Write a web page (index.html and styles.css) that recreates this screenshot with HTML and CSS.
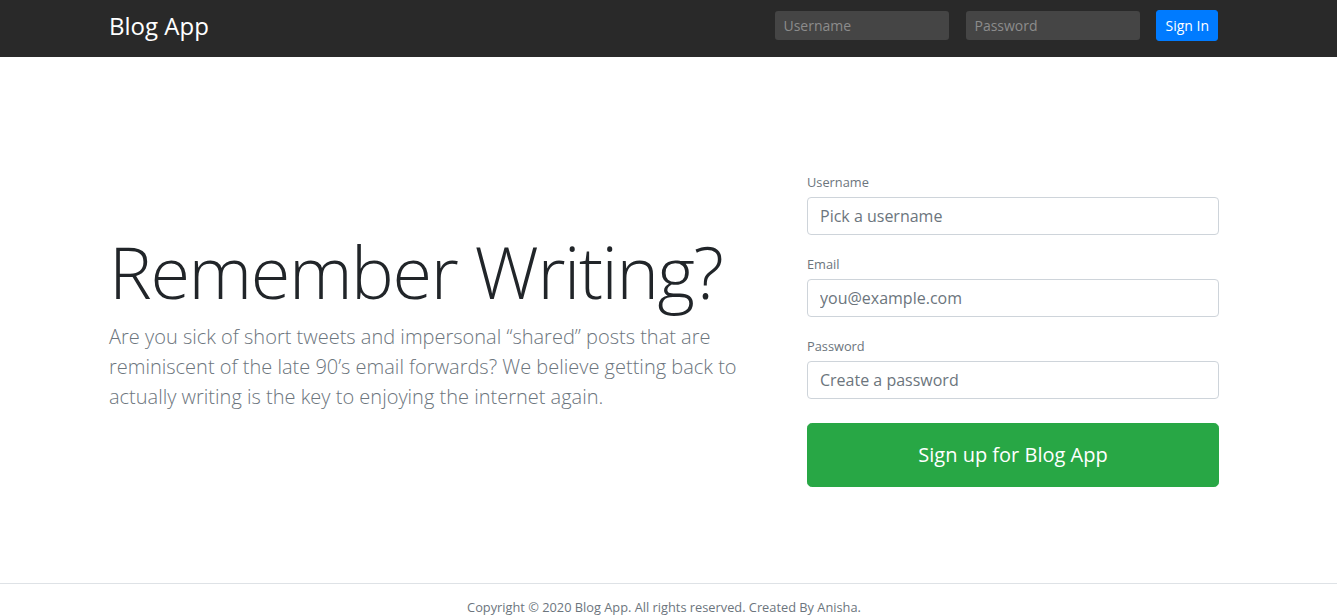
FILE: index.html
```html
<!DOCTYPE html>
<html lang="en">
<head>
<meta charset="utf-8">
<title>Blog App</title>
<link rel="stylesheet" href="styles.css">
</head>
<body>
<div class="page">
  <header class="navbar">
    <div class="container nav-inner">
      <h4 class="brand">Blog App</h4>
      <form class="nav-form">
        <input class="nav-input" type="text" placeholder="Username">
        <input class="nav-input" type="password" placeholder="Password">
        <button class="btn-signin" type="button">Sign In</button>
      </form>
    </div>
  </header>

  <main class="hero">
    <div class="container hero-row">
      <div class="hero-text">
        <h1 class="display">Remember Writing?</h1>
        <p class="lead">Are you sick of short tweets and impersonal “shared” posts that are reminiscent of the late 90’s email forwards? We believe getting back to actually writing is the key to enjoying the internet again.</p>
      </div>
      <div class="hero-form">
        <form>
          <div class="form-group">
            <label class="label">Username</label>
            <input class="form-control" type="text" placeholder="Pick a username">
          </div>
          <div class="form-group">
            <label class="label">Email</label>
            <input class="form-control" type="email" placeholder="you@example.com">
          </div>
          <div class="form-group">
            <label class="label">Password</label>
            <input class="form-control" type="password" placeholder="Create a password">
          </div>
          <button class="btn-signup" type="button">Sign up for Blog App</button>
        </form>
      </div>
    </div>
  </main>

  <footer class="footer">
    <p class="footer-text">Copyright © 2020 Blog App. All rights reserved. Created By Anisha.</p>
  </footer>
</div>
</body>
</html>
```

FILE: styles.css
```css
* { box-sizing: border-box; }

html, body {
  margin: 0;
  padding: 0;
}

body {
  font-family: "Open Sans", "Liberation Sans", sans-serif;
  font-size: 16px;
  line-height: 1.5;
  color: #212529;
  background: #fff;
}

.page {
  padding-right: 9px;
}

.container {
  width: 1140px;
  margin: 0 auto;
  padding: 0 15px;
}

/* Navbar */
.navbar {
  background: #292929;
  height: 57px;
  margin-right: -9px;
  padding-right: 9px;
}

.nav-inner {
  display: flex;
  justify-content: space-between;
  align-items: flex-start;
  padding-top: 10px;
}

.brand {
  margin: 2px 0 0;
  font-size: 24px;
  font-weight: 400;
  line-height: 1.2;
  color: #fff;
}

.nav-form {
  display: flex;
  align-items: center;
  margin-right: 1px;
}

.nav-input {
  width: 174px;
  height: 29px;
  margin-right: 17px;
  padding: 0 8px;
  border: 0;
  border-radius: 3px;
  background: #454545;
  color: #fff;
  font-family: inherit;
  font-size: 14px;
}

.nav-input:nth-child(2) { margin-right: 16px; }

.nav-input::placeholder { color: #8c8c8c; }

.btn-signin {
  height: 31px;
  padding: 0 8px;
  border: 1px solid #007bff;
  border-radius: 3px;
  background: #007bff;
  color: #fff;
  font-family: inherit;
  font-size: 14px;
  line-height: 1.5;
}

/* Hero */
.hero {
  padding: 112px 0 96px;
}

.hero-row {
  display: flex;
  align-items: center;
}

.hero-text {
  width: 650px;
  flex: none;
}

.display {
  margin: 0 0 7px;
  font-size: 72px;
  font-weight: 300;
  line-height: 1.2;
  color: #212529;
  letter-spacing: -1.4px;
}

.lead {
  margin: 0 0 16px;
  font-size: 20px;
  font-weight: 300;
  line-height: 1.5;
  color: #6c757d;
}

.hero-form {
  flex: 1;
  padding-left: 48px;
}

.form-group {
  margin-bottom: 16px;
}

.label {
  display: block;
  padding-top: 3px;
  margin-bottom: 5px;
  font-size: 12.8px;
  line-height: 20px;
  color: #6c757d;
}

.form-control {
  display: block;
  width: 100%;
  height: 38px;
  padding: 6px 12px;
  border: 1px solid #ced4da;
  border-radius: 4px;
  font-family: inherit;
  font-size: 16px;
  color: #495057;
}

.form-control::placeholder { color: #6c757d; }

.btn-signup {
  display: block;
  width: 100%;
  height: 64px;
  margin-top: 24px;
  border: 1px solid #28a745;
  border-radius: 4.8px;
  background: #28a745;
  color: #fff;
  font-family: inherit;
  font-size: 20px;
  line-height: 1.5;
}

/* Footer */
.footer {
  border-top: 1px solid #dee2e6;
  margin-right: -9px;
  padding: 14px 9px 16px 0;
}

.footer-text {
  margin: 0;
  text-align: center;
  font-size: 12.8px;
  line-height: 1.5;
  color: #6c757d;
}
```
